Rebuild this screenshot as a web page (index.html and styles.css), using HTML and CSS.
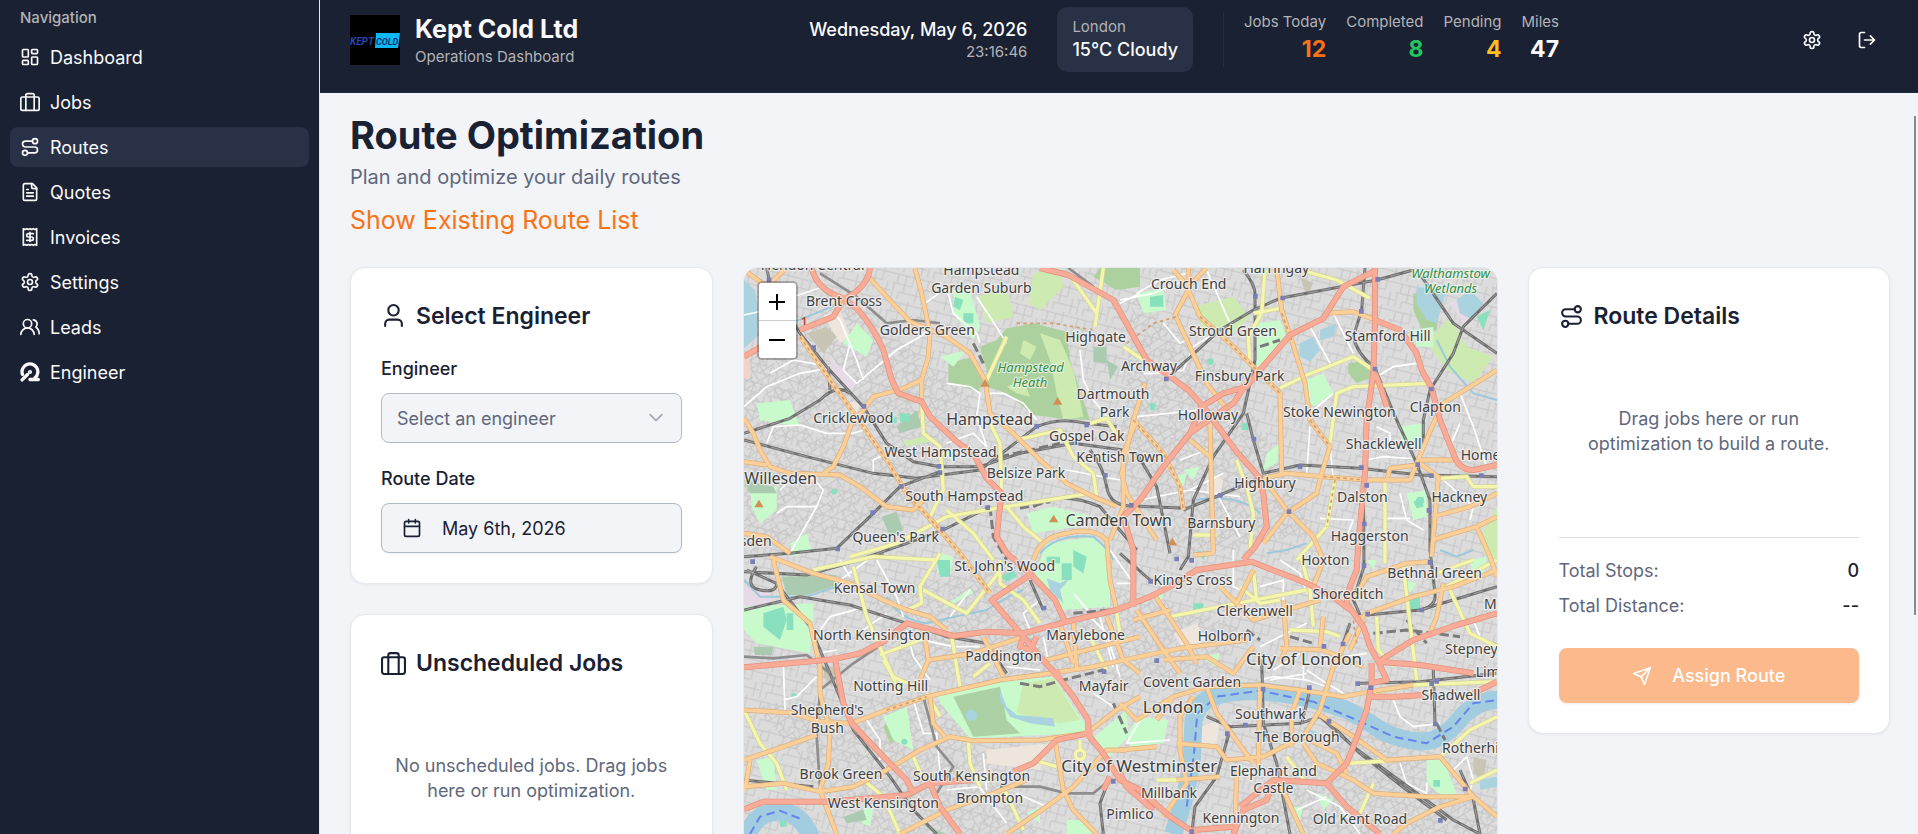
FILE: index.html
```
<!DOCTYPE html>
<html lang="en">
<head>
    <meta charset="UTF-8">
    <meta name="viewport" content="width=device-width, initial-scale=1.0">
    <title>Kept Cold Ltd - Route Optimization</title>
    <link rel="stylesheet" href="styles.css">
</head>
<body>

<!-- Icons -->
<svg class="sprite" aria-hidden="true">
    <symbol id="i-dashboard" viewBox="0 0 24 24"><rect width="7" height="9" x="3" y="3" rx="1"/><rect width="7" height="5" x="14" y="3" rx="1"/><rect width="7" height="9" x="14" y="12" rx="1"/><rect width="7" height="5" x="3" y="16" rx="1"/></symbol>
    <symbol id="i-jobs" viewBox="0 0 24 24"><rect width="22" height="16" x="1" y="6" rx="2"/><path d="M7 22V4a2 2 0 0 1 2-2h6a2 2 0 0 1 2 2v18"/></symbol>
    <symbol id="i-route" viewBox="0 0 24 24"><circle cx="6" cy="19" r="3"/><path d="M9 19h8.5a3.5 3.5 0 0 0 0-7h-11a3.5 3.5 0 0 1 0-7H15"/><circle cx="18" cy="5" r="3"/></symbol>
    <symbol id="i-quote" viewBox="0 0 24 24"><path d="M15 2H6a2 2 0 0 0-2 2v16a2 2 0 0 0 2 2h12a2 2 0 0 0 2-2V7Z"/><path d="M14 2v4a2 2 0 0 0 2 2h4M10 9H8M16 13H8M16 17H8"/></symbol>
    <symbol id="i-invoice" viewBox="0 0 24 24"><path d="M4 2v20l2-1 2 1 2-1 2 1 2-1 2 1 2-1 2 1V2l-2 1-2-1-2 1-2-1-2 1-2-1-2 1Z"/><path d="M16 8h-6a2 2 0 1 0 0 4h4a2 2 0 1 1 0 4H8M12 17.500V6.500"/></symbol>
    <symbol id="i-settings" viewBox="0 0 24 24"><path d="M12.220 2h-.44a2 2 0 0 0-2 2v.18a2 2 0 0 1-1 1.730l-.43.25a2 2 0 0 1-2 0l-.15-.08a2 2 0 0 0-2.730.73l-.22.38a2 2 0 0 0 .73 2.730l.15.1a2 2 0 0 1 1 1.720v.51a2 2 0 0 1-1 1.740l-.15.09a2 2 0 0 0-.73 2.730l.22.38a2 2 0 0 0 2.730.73l.15-.08a2 2 0 0 1 2 0l.43.25a2 2 0 0 1 1 1.730V20a2 2 0 0 0 2 2h.44a2 2 0 0 0 2-2v-.18a2 2 0 0 1 1-1.730l.43-.25a2 2 0 0 1 2 0l.15.08a2 2 0 0 0 2.730-.73l.22-.39a2 2 0 0 0-.73-2.730l-.15-.08a2 2 0 0 1-1-1.740v-.5a2 2 0 0 1 1-1.740l.15-.09a2 2 0 0 0 .73-2.730l-.22-.38a2 2 0 0 0-2.730-.73l-.15.08a2 2 0 0 1-2 0l-.43-.25a2 2 0 0 1-1-1.730V4a2 2 0 0 0-2-2z"/><circle cx="12" cy="12" r="3"/></symbol>
    <symbol id="i-users" viewBox="0 0 24 24"><path d="M18 21a8 8 0 0 0-16 0" transform="translate(-1)"/><circle cx="9" cy="8" r="5"/><path d="M23 20c0-3.400-2-6.500-4-8a5 5 0 0 0-3-8.600"/></symbol>
    <symbol id="i-engineer" viewBox="0 0 24 24"><path stroke-width="4" d="M3 15A9.500 9.500 0 1 1 18 19"/><path stroke-width="4" d="M2.500 21.500 9 15M12 21h10"/><circle cx="12" cy="12" r="1.500"/></symbol>
    <symbol id="i-user" viewBox="0 0 24 24"><path d="M20 21v-2a4 4 0 0 0-4-4H8a4 4 0 0 0-4 4v2"/><circle cx="12" cy="6" r="5"/></symbol>
    <symbol id="i-calendar" viewBox="0 0 24 24"><path d="M8 2v4M16 2v4M3 10h18"/><rect width="18" height="18" x="3" y="4" rx="2"/></symbol>
    <symbol id="i-chevron" viewBox="0 0 24 24"><path d="m5 8 7 7 7-7"/></symbol>
    <symbol id="i-logout" viewBox="0 0 24 24"><path d="M9 21H5a2 2 0 0 1-2-2V5a2 2 0 0 1 2-2h4M16 17l5-5-5-5M21 12H9"/></symbol>
    <symbol id="i-send" viewBox="0 0 24 24"><path d="m22 2-7 20-4-9-9-4Z"/><path d="M22 2 11 13"/></symbol>
</svg>

<div class="app">
    <nav class="sidebar" aria-label="Navigation">
        <p class="sidebar-title">Navigation</p>
        <a href="#dashboard"><svg class="icon"><use href="#i-dashboard"/></svg>Dashboard</a>
        <a href="#jobs"><svg class="icon"><use href="#i-jobs"/></svg>Jobs</a>
        <a href="#routes" class="active"><svg class="icon"><use href="#i-route"/></svg>Routes</a>
        <a href="#quotes"><svg class="icon"><use href="#i-quote"/></svg>Quotes</a>
        <a href="#invoices"><svg class="icon"><use href="#i-invoice"/></svg>Invoices</a>
        <a href="#settings"><svg class="icon"><use href="#i-settings"/></svg>Settings</a>
        <a href="#leads"><svg class="icon"><use href="#i-users"/></svg>Leads</a>
        <a href="#engineer"><svg class="icon"><use href="#i-engineer"/></svg>Engineer</a>
    </nav>

    <div class="content">
        <header class="header">
            <div class="brand">
                <svg class="logo" viewBox="0 0 50 50" role="img" aria-label="Kept Cold">
                    <rect width="50" height="50" fill="#000"/>
                    <path d="M26 18h24l-2 15H25z" fill="#0bb8f5"/>
                    <text x="0" y="30" class="logo-text" fill="#2746a8">KEPT</text>
                    <text x="26" y="30" class="logo-text small-caps" fill="#12306e">COLD</text>
                </svg>
                <div>
                    <div class="brand-name">Kept Cold Ltd</div>
                    <div class="small">Operations Dashboard</div>
                </div>
            </div>
            <div class="status">
                <div class="clock">
                    <div class="strong">Wednesday, May 6, 2026</div>
                    <div class="small">23:16:46</div>
                </div>
                <div class="weather">
                    <div class="small">London</div>
                    <div class="strong">15°C Cloudy</div>
                </div>
                <div class="stats">
                    <div class="stat"><div class="small">Jobs Today</div><div class="number orange">12</div></div>
                    <div class="stat"><div class="small">Completed</div><div class="number green">8</div></div>
                    <div class="stat"><div class="small">Pending</div><div class="number yellow">4</div></div>
                    <div class="stat"><div class="small">Miles</div><div class="number">47</div></div>
                </div>
            </div>
            <div class="actions">
                <button type="button" aria-label="Settings"><svg class="icon"><use href="#i-settings"/></svg></button>
                <button type="button" aria-label="Log out"><svg class="icon"><use href="#i-logout"/></svg></button>
            </div>
        </header>

        <main class="main">
            <h1>Route Optimization</h1>
            <p class="subtitle">Plan and optimize your daily routes</p>
            <button type="button" class="link-button">Show Existing Route List</button>

            <div class="grid">
                <div class="column">
                    <section class="card">
                        <h2><svg class="icon large"><use href="#i-user"/></svg>Select Engineer</h2>
                        <label for="engineer">Engineer</label>
                        <div class="select-box">
                            <select id="engineer">
                                <option>Select an engineer</option>
                            </select>
                            <svg class="icon chevron"><use href="#i-chevron"/></svg>
                        </div>
                        <label for="date">Route Date</label>
                        <button type="button" id="date" class="date-button"><svg class="icon"><use href="#i-calendar"/></svg>May 6th, 2026</button>
                    </section>
                    <section class="card">
                        <h2><svg class="icon large"><use href="#i-jobs"/></svg>Unscheduled Jobs</h2>
                        <p class="empty">No unscheduled jobs. Drag jobs here or run optimization.</p>
                    </section>
                </div>

                <div class="map">
                    <svg class="map-canvas" viewBox="12 24 2259 2250" preserveAspectRatio="xMidYMin slice" role="img" aria-label="Map of London">
                        <defs>
                            <pattern id="streets" width="92" height="84" patternUnits="userSpaceOnUse" patternTransform="rotate(14)">
                                <path d="M0 10h92M0 38h60M24 62h68M14 10v28M38 10v52M60 0v38M78 38v46M6 38v46M24 62v22"/>
                            </pattern>
                            <pattern id="streets2" width="76" height="88" patternUnits="userSpaceOnUse" patternTransform="rotate(-32)">
                                <path d="M0 8h76M0 30h50M20 54h56M0 74h76M12 8v22M34 30v44M50 8v46M66 54v34M8 30v44"/>
                            </pattern>
                            <g id="rail">
                                <path d="M80 24 90 70 180 220 260 320 370 440 440 550 520 605 600 620 720 620 840 580 1000 550 1150 570M12 520 150 475 240 420Q290 370 330 400M270 390 265 320M12 540 200 590 400 640 530 655 720 630 890 500Q960 470 1040 490L1130 500M12 890 150 880 290 865 400 760 480 680 600 635M370 895 500 850 610 810 750 740M880 740Q960 690 1080 740L1190 870M1050 570Q1090 620 1100 680 1110 740 1180 738L1340 745"/>
                                <path d="M1510 30Q1550 80 1545 110L1545 300 1510 460 1420 590 1360 720 1345 890 1320 930M1520 460 1540 540 1570 640 1680 615 1860 625 2040 645 2271 650M1280 355 1440 210 1540 150 1620 115 1910 60 2020 30M1875 24 1865 150 1840 230Q1850 280 1905 325L1970 480 2030 610 2070 720 2070 870 2085 1000Q2090 1040 2040 1050L1880 1065M2045 50 2140 190 2271 280M2271 100 2170 200 2140 280 2070 390 2050 480 2050 560M1870 660 1872 920 1840 1020 1860 1065M1190 580 1250 680 1290 880M1330 750 1440 705 1570 650"/>
                                <path d="M12 935 200 945 430 880M12 1050 180 1010 330 1035 500 1090 620 1130 740 1150 800 1240M20 930 110 970 210 1100 270 1240 340 1410 450 1550 520 1650 590 1722M50 920Q10 980 60 990 110 1000 110 970M12 1560 220 1580M870 960 910 1050M1110 1550 1080 1630 1090 1722"/>
                                <path d="M1140 880 1230 960M1565 1200 1570 1390 1610 1510 1650 1722M1400 1370 1470 1400 1680 1390 1740 1370 1840 1460 1990 1570 2140 1680 2220 1722M1760 1380 1860 1480 2000 1590 2120 1680M1710 1290 1685 1390M1470 1410 1430 1550 1365 1640 1355 1722M1860 1270 2040 1265 2271 1240M2040 1050 2271 980M2080 1230 2085 1390M1810 1150 1830 1090M2160 1530 2200 1620 2220 1722"/>
                            </g>
                            <g id="minor">
                                <path d="M1090 24 1065 200M1000 60 1070 160M800 230 740 360M545 430 550 520 600 560 610 690 570 770M750 490 780 550 785 700M330 890 470 850 620 770 800 740 1050 700M620 750 700 820 760 900M800 740 850 800 910 850M830 540 960 510 1000 590 1060 640 1070 710M1050 490 1100 475 1140 540M1150 260 1210 300M1700 35 1790 60 1890 115M1540 160 1620 145M1575 30 1565 160 1525 230 1530 310M1620 385 1700 345 1840 290 1900 330M1770 550 1790 400 1840 380 2070 370M1785 660 1760 800 1670 900M1935 660 1935 910M1490 600 1520 680 1540 760 1530 870M1360 825 1430 825M2100 655 2180 650 2200 680 2271 680"/>
                                <path d="M1680 880 1710 990 1720 1100M1290 1070 1440 1040 1700 990M1650 1110 1760 1115 1800 1130M2060 950 2200 900M2100 990 2271 900M2130 990 2190 1120 2271 1160M1910 1070 1915 1170 1960 1220M1890 1300 2020 1275 2271 1265M1820 1510 1980 1500M1900 1570 1860 1660M1640 1490 1700 1570M2271 1370 2190 1410 2100 1490M2190 1570 2271 1530M1250 1560 1340 1560M1540 930 1550 1020M1500 980 1560 1030 1620 1020M1990 920 2030 1260"/>
                                <path d="M12 1350 60 1450 110 1510 140 1590M340 920 380 1070 480 1300M220 930 400 890 590 900M600 880 540 980 545 1030 500 1050M550 990 680 1060 790 920M420 1185 540 1140M430 1200 460 1250 500 1270M635 1130 660 1280M520 1490 550 1560M685 1445 690 1510 720 1580M790 1580 850 1710M370 1560 430 1610 480 1722M780 900 780 970 850 1020 900 1090M880 1500 950 1520M1020 1440 1020 1470M560 1300 600 1370M700 1250 750 1210M1130 1060 1140 1120M1050 1130 1100 1230"/>
                                <circle cx="1020" cy="1484" r="14"/>
                            </g>
                            <g id="secondary">
                                <path d="M12 30 80 80 140 24M385 50 440 110 510 185 620 230 690 280 735 360 750 460 820 520 900 600 980 670 1060 710 1130 740M525 24 545 100 570 220 565 290 545 360 545 425M545 360 490 385 400 410 370 450 335 490 310 560 280 620 250 640M12 475 40 520 60 570 90 620 150 640 300 645 360 680 440 740 520 750 560 710M12 605 80 615M12 820 80 830 150 880M90 890 220 940 330 970 430 1020 500 1050 570 1070 620 1110M180 230 270 360 370 500 440 600 500 700 600 810 660 880 750 1000"/>
                                <path d="M880 900Q900 830 980 820 1060 800 1100 840L1110 960 1130 1050M1190 480 1150 580 1150 740 1110 840M100 900 130 1020 210 1090 240 1220 240 1300 270 1410 265 1510 240 1590 290 1722M12 1350 150 1358 240 1385 335 1390 440 1350 560 1310 780 1260 930 1240 1060 1220 1200 1190 1320 1165 1520 1140M12 1500 130 1460 230 1425M12 1580 130 1570 240 1595 340 1580 440 1530 540 1470 630 1430 700 1442 900 1440 1040 1420 1130 1350 1200 1310M550 1100 565 1200 540 1260M565 1200 700 1180 850 1130M570 1310 580 1390 615 1430M480 1722 620 1650 760 1600 860 1560M800 1722 920 1640 1000 1580 1100 1470 1160 1470M945 1440 970 1590 1000 1650 1070 1722M1000 1080 1010 1230M960 1090 1000 1210M920 1200 1200 1130M730 1130 790 1250M1100 1070 1150 1200 1200 1240M15 1590 30 1500"/>
                                <path d="M1345 24 1345 90 1305 165 1350 260 1400 370 1470 460M1345 90 1380 170 1470 250 1540 320 1620 400 1625 640M1300 30 1345 80 1400 24M1610 24 1625 150 1655 240 1695 370 1710 480 1770 560 1745 640 1730 700 1640 760 1570 850M1215 370 1180 480 1145 640 1160 700 1250 840M1180 480 1270 580 1320 680 1330 750M1410 490 1415 700 1420 880M1350 540 1410 590M1570 655 1640 640 1750 650 1880 660 2010 660 2030 610 2080 490 2110 430 2271 330M2040 600 2140 600M2095 650 2075 890M1940 660 1950 625 2030 615M2080 770 2190 740 2271 700M2075 840 2210 800 2271 770M2210 800 2250 890 2271 950M1570 655 1640 750 1720 830 1750 900 1720 980M1760 160 1840 155 1920 185M1420 880 1360 885M2040 610 2100 655"/>
                                <path d="M1190 1050 1270 1170 1320 1240M1240 1000 1340 1150 1370 1210M1180 1080 1290 1050M1270 1200 1400 1190 1480 1240 1540 1160M1540 930 1490 1030 1540 1080 1740 1020M1440 980 1500 1040M1630 1020 1640 1160 1620 1210M1620 1165 1750 1170 1870 1220M1750 1070 1740 1160M1830 1120 1780 1220 1740 1350 1690 1430 1570 1490 1460 1500 1430 1460 1310 1450M1870 1080 1830 1170M1400 1280 1560 1275 1680 1290 1810 1310 1890 1295 2020 1275M1560 1280 1555 1520M1680 1290 1655 1360 1655 1460M1400 1280 1430 1360 1540 1510M1360 1310 1320 1370 1320 1470 1340 1570 1270 1670M1310 1560 1440 1550M1740 1365 1840 1430 1940 1500 2100 1490 2200 1610 2271 1670M1850 1090 1880 1060 2020 1010 2140 980 2271 930M2110 970 2090 1070 2070 1120M1840 1020 1880 950 2000 910 2070 905M1690 1450 1730 1510 1840 1560 1900 1600 2060 1610M2200 1610 2100 1640 2000 1690 1960 1722M1490 1520 1485 1722M1620 1570 1690 1722M1250 1460 1140 1470M1140 1330 1190 1380 1300 1310M1250 1380 1300 1310 1400 1280M1690 1430 1790 1480 1820 1540M2060 1610 2200 1610"/>
                            </g>
                            <g id="primary">
                                <path d="M215 24Q230 90 310 115L350 145Q400 200 430 270L455 360 475 400 545 425 570 470 650 545 700 580 740 655 785 700 780 740 770 830 800 880 870 940 945 1020 975 1085M390 24Q385 80 310 120L280 170 180 210M12 290 60 262M900 24 985 45 1120 120 1165 200 1220 300 1290 350 1345 390 1390 440 1490 575 1560 655 1570 700 1580 800 1545 860 1510 900"/>
                                <path d="M1900 35 1810 80 1750 175 1650 225 1560 330 1520 380 1450 400 1385 440 1350 520 1270 620 1200 720 1150 770 1180 870 1180 1040M1520 370 1480 430 1420 470 1350 520M1905 24 1905 180 1900 340 1880 480 1875 640 1855 850 1850 930 1830 980 1820 1030 1870 1100 1890 1160 1915 1205M1905 180 1980 210 2030 280 2045 330 2075 385 2100 480 2140 580Q2155 630 2200 630L2271 615M1905 340 1925 390 1940 440"/>
                                <path d="M12 1222 280 1198 360 1180 430 1145 500 1090 560 1105 640 1128 740 1115 850 1120 980 1085 1130 1050 1230 1010 1290 980 1370 930 1535 905 1700 970 1780 1010 1830 1050M285 1198 310 1330 335 1390 430 1490 500 1560 520 1600M12 1648 70 1625 270 1625 500 1605 570 1570 700 1560M570 1570 600 1640 660 1722M870 945 755 1020 850 1130 900 1190 950 1245 1000 1310 1045 1380 1045 1425 1090 1480 1140 1560 1200 1590 1290 1670 1370 1722M1045 1420 950 1440 880 1510 820 1535M850 1130 840 1160 870 1170 890 1130M1110 1550 1090 1590M1140 1540 1160 1580 1240 1650"/>
                                <path d="M1915 1205 2040 1215 2200 1240M1915 1205 2020 1140 2150 1095 2271 1060M1895 1210 1895 1270 1880 1350 1840 1460 1820 1510 1760 1570 1600 1560 1580 1620 1510 1650 1480 1722M1760 1570 1820 1640 1920 1722M1915 1205 1940 1260 1890 1270M1890 1310 1970 1310 2050 1305M2200 1300 2271 1265M1360 1710 1480 1700M1600 1560 1500 1640"/>
                            </g>
                        </defs>
                        <rect class="land" width="2300" height="2300"/>
                        <rect fill="url(#streets)" width="2300" height="2300"/>
                        <path fill="url(#streets2)" d="M12 280 330 120 700 420 560 760 12 880zM1180 100 1500 380 1720 820 1300 900 1140 600zM380 1000 900 900 1500 1100 1400 1300 500 1250zM40 1340 620 1300 900 1722H400zM1600 1500 1900 1380 2271 1650V1722H1500z"/>

                        <!-- Built-up blocks and retail -->
                        <path fill="#eee6dc" d="M250 165 300 150 330 230 300 250zM330 425 360 430 350 465 325 450zM1400 640 1450 660 1440 710 1400 700zM740 1470 930 1450 900 1530 740 1510zM1380 1400 1440 1380 1430 1450 1370 1460zM1300 1120 1370 1090 1400 1140 1330 1170z"/>
                        <path fill="#e6dae6" d="M270 290 350 370 335 395 275 350zM12 980 90 1000 100 1030 12 1060zM2130 130 2190 100 2230 150 2170 190z"/>
                        <path fill="#f5d3c8" d="M12 292h17v63H12z"/>
                        <path fill="#c9c5b4" d="M200 220 260 200 290 230 250 280zM2200 1490 2240 1500 2230 1560 2200 1540zM255 1210 290 1230 275 1280 250 1250zM1680 50 1720 70 1700 110z"/>

                        <!-- Parks -->
                        <g fill="#add19e">
                            <path d="M720 260 770 240 800 205 880 190 980 215 990 300 1050 480 960 475 880 465 800 400 740 380 740 330z"/>
                            <path d="M625 310 700 290 735 350 715 395 625 365zM1080 24H1200V80L1130 90 1060 50z"/>
                            <path d="M1825 310 1890 300 1900 350 1850 370 1825 340z"/>
                            <path d="M430 1400 480 1355 500 1430 450 1450zM2060 1500 2100 1500 2120 1580 2080 1580z"/>
                            <path d="M2020 100 2100 120 2090 210 2050 220 2020 150z"/>
                        </g>
                        <g fill="#cdebb0">
                            <path d="M880 40 960 24 970 80 900 150 865 130zM715 110 800 80 820 170 740 190z"/>
                            <path d="M2060 250 2130 170 2180 260 2260 290 2200 370 2120 330z"/>
                            <path d="M900 220 960 240 1000 330 1030 470 970 480 950 400 930 300z"/>
                            <path d="M850 240 890 260 870 300 840 280zM800 380 850 360 870 410 830 400z"/>
                            <path d="M1360 140 1480 110 1530 170 1480 220 1390 210z"/>
                            <path d="M490 545 560 525 570 545 500 560zM2220 830 2271 740V900L2230 880z"/>
                        </g>
                        <g fill="#c8facc">
                            <path d="M310 250 350 190 400 240 380 290zM50 430 150 420 180 500 60 480z"/>
                            <path d="M600 290 680 270 640 320zM640 90 690 90 720 200 700 240 640 160z"/>
                            <path d="M1550 190 1620 180 1640 230 1590 290 1550 330z"/>
                            <path d="M1700 360 1750 340 1780 400 1720 440 1700 410zM1975 500 2050 490 2060 560 1990 560z"/>
                            <path d="M860 760 940 740 1060 770 1010 800 880 820z"/>
                            <path d="M900 900 920 850 1060 830 1110 880 1110 1040 960 1050 900 980 880 930z"/>
                            <path d="M30 670 110 680 110 750 60 790 35 740zM12 1040 220 1030 220 1100 210 1180 50 1150 12 1110z"/>
                            <path d="M590 1300 780 1265 940 1250 1040 1400 1030 1420 690 1435 600 1330z"/>
                            <path d="M1050 1440 1160 1350 1165 1430 1110 1490zM1160 1420 1200 1370 1285 1380 1270 1450 1170 1460z"/>
                            <path d="M430 1370 500 1340 520 1470 460 1440zM50 1500 100 1490 110 1590 80 1590z"/>
                            <path d="M2060 1500 2110 1500 2150 1600 2120 1620 2060 1570zM980 1680 1040 1680 1060 1722H980z"/>
                            <path d="M600 1050 690 985 700 1000 660 1020zM2190 900 2240 890 2230 950 2200 960zM1580 580 1620 550 1610 610 1570 630zM2000 700 2060 690 2060 770 2020 780zM150 850 200 820 215 870 160 890z"/>
                            <path d="M2020 210 2080 200 2080 260 2030 260zM610 570 650 570 640 610zM600 880 640 890 630 940 590 940zM370 1640 400 1650 390 1700 365 1690z"/>
                            <path d="M1190 100 1270 85 1280 150 1210 160zM1330 630 1380 620 1360 660zM860 1660 900 1640 900 1690zM1300 650 1340 640 1330 680zM1990 960 2030 970 2010 1000zM1880 900 1910 900 1900 930zM1380 1190 1440 1180 1430 1220zM1650 1640 1690 1640 1680 1680zM1730 1600 1780 1620 1750 1650zM700 1560 740 1540 750 1570zM1240 1010 1270 1000 1260 1040z"/>
                        </g>
                        <path fill="#abd1a4" d="M640 1310 780 1280 800 1380 840 1420 700 1430z"/>
                        <path fill="#cdebb0" d="M850 1270 940 1255 1020 1380 960 1390 830 1360z"/>
                        <g fill="#aacbaf">
                            <path d="M125 950 290 945 280 980 200 1005 140 1005zM470 500 530 450 545 500 480 520zM425 770 470 755 490 810 450 830zM1060 260 1100 260 1100 310 1060 305zM1100 300 1135 320 1110 360z"/>
                            <path d="M310 1670 370 1650 380 1680 320 1690zM40 1160 100 1160 95 1185 45 1185zM12 660 100 680 110 700 30 700zM540 1690 620 1722H590z"/>
                        </g>
                        <g fill="#88e0be">
                            <path d="M450 470h20v20h-20zM480 460h30v25h-30zM645 110 670 120 660 150 640 140zM670 160h30v30h-30zM70 1060 130 1040 140 1080 120 1140 70 1100zM140 1060h20v50h-20zM590 900h40v50h-30zM780 950 820 930 830 950 800 965zM920 890h40v20h-40zM965 910h30v50h-30zM1000 870 1040 890 1030 940 1000 920z"/>
                            <path d="M2210 170 2250 150 2230 210zM2020 725 2050 710 2050 740 2030 745zM1230 110 1270 105 1270 140 1230 140zM1505 490h20v20h-20zM2080 1560h20v20h-20zM1370 870 1400 880 1390 900zM1360 1030h30v25h-30zM2000 1010h40v40h-40zM120 1670h20v30h-20zM1230 430h15v20h-15z"/>
                            <circle cx="1411" cy="305" r="10"/><circle cx="282" cy="695" r="9"/><circle cx="493" cy="1445" r="9"/><circle cx="162" cy="1307" r="8"/><circle cx="2040" cy="722" r="12"/>
                        </g>

                        <!-- Water -->
                        <g fill="#aad3df">
                            <path d="M12 60 45 90 55 150 50 230 12 265zM1680 250 1720 230 1740 270 1710 305 1680 290zM1740 210 1790 190 1780 230 1740 240z"/>
                            <path d="M2030 80 2120 90 2090 190 2060 180 2030 130zM2150 120 2190 90 2230 130 2200 180 2160 160z"/>
                            <path d="M780 1290 800 1340 830 1365 940 1375 945 1400 870 1390 810 1370 780 1320z"/>
                            <circle cx="694" cy="1366" r="17"/>
                            <path d="M920 955 960 970 990 955 960 990 970 1030 930 990zM1690 1400 1740 1420 1700 1430zM2220 1560 2271 1550V1580L2220 1590z"/>
                        </g>
                        <g class="water">
                            <path class="river" d="M1300 1722 1335 1610 1355 1510 1360 1390Q1365 1330 1420 1310 1480 1290 1570 1295 1700 1305 1820 1350 1880 1380 1920 1410 2010 1455 2080 1440 2130 1420 2170 1365 2220 1320 2271 1320"/>
                            <path class="river" d="M20 1735Q40 1660 110 1655 180 1650 215 1735"/>
                            <path d="M12 960 60 1010 200 1010 290 980M440 1010Q480 1080 560 1090 640 1070 740 1050 800 1010 850 990M900 880Q950 820 1060 830 1110 870 1120 900M2090 240 2130 320 2200 400 2271 420M150 190 240 155 300 130M1580 880 1640 870 1700 850M2100 870 2150 890 2200 870M1360 720Q1500 700 1560 760M780 1150 840 1130 880 1140"/>
                            <path class="ferry" d="M1340 1640 1362 1480 1372 1360 1430 1310 1560 1292 1720 1325 1850 1380 1960 1430 2060 1450 2140 1400 2200 1330 2271 1320M30 1722 60 1670 120 1652 190 1680"/>
                        </g>

                        <!-- Minor streets in white -->
                        <path class="white" d="M12 165 80 150 160 110 250 80M90 340 160 300 270 320M350 370 470 270 540 230 565 210M300 180 280 160M330 250 310 330 350 370M370 360 350 300 300 180M12 440 80 380 180 340 265 325M100 500 180 495 260 520 340 520 370 510M80 550 100 500M120 690 140 670 200 660 230 650M230 740 250 690 215 650M230 740 150 880M230 740 140 740 110 760M400 640 400 600 440 580M620 80 640 160 710 220 720 250M710 110 750 170 800 250M555 130 610 90M620 370 690 380 720 400 710 470 740 560 700 520 620 550M740 400 790 400 850 430 890 480M1140 130 1200 100M1020 270 1030 360 1060 420 1110 480M1190 100 1260 60 1340 40M1400 30 1470 190 1360 260 1330 330 1250 340 1210 340M1270 190 1320 250 1340 240M1190 470 1380 450M1710 200 1770 310M1780 160 1840 280M1910 350 1960 320 2030 310M1720 450 1780 400M1910 500 1950 520 1950 560M1880 600 1930 590 2080 600M1700 640 1710 500M1770 560 1780 660M1980 700 2000 780 2050 810M1940 775 2010 775M1740 775 1840 780 1820 830M2160 400 2200 500 2240 620M2110 660 2200 740 2190 780M2160 490 2130 560M1430 700 1500 830M1320 600 1400 570M1350 690 1450 640M1200 720 1350 690 1500 710M230 1180 290 1170M300 960 440 860M240 1110 270 1070 360 1045M370 1110 440 1060M130 1210 135 1350M130 1320 170 1310 230 1250M500 1110 520 1190 570 1260M410 900 470 1010 490 1070M300 900 330 950M520 1320 550 1420 590 1420 600 1540M380 1380 420 1440 420 1500M620 1590 720 1580M710 1570 800 1690M730 1480 740 1590M830 1600 920 1640M690 990 630 1070M500 1130 640 1160 720 1160M800 1220 900 1230M910 1130 930 1230 960 1240M1050 1070 1100 1120 1140 1250M1080 1070 1120 1220M1060 1300 1120 1340M1200 1380 1160 1450 1290 1440M1560 1160 1700 1090M1590 1260 1700 1240M1560 1260 1600 1250 1700 1260 1760 1280M1600 1230 1680 1180M1700 1230 1760 1270 1810 1300M1690 1200 1690 1260M1740 1200 1880 1180M1960 1320 1980 1370 2020 1400 2100 1390M2140 1530 2180 1490 2200 1560 2190 1590M1980 1510 2000 1570 2060 1600 2060 1570M1700 1590 1800 1640 1860 1722M1670 1650 1760 1610M1480 870 1480 980 1500 990M1630 1070 1630 960 1560 980M1620 900 1680 940 1700 1000M1340 60 1240 100 1140 120M2200 1080 2220 1130M1000 1000 1060 1070M900 1020 850 1060 870 1110M1110 870 1180 970M1180 970 1130 970M980 630 1140 660"/>

                        <!-- Railways -->
                        <use href="#rail" class="rail"/>
                        <use href="#rail" class="rail-ties"/>
                        <path class="tube" d="M240 40 350 110 440 190 520 180 600 190M985 24 1060 80M12 1190 100 1195 200 1185 270 1240M430 1150 340 1210 240 1290 230 1430 240 1580M550 1310 590 1460 640 1520 590 1600M780 1580 900 1580 980 1600 1060 1600 1110 1560"/>
                        <path class="tunnel" d="M840 1270 900 1280 970 1260 1090 1230M780 590 960 550M700 250 730 310M750 740 760 830 800 900M840 745 930 725M1000 1060 1110 1050M1900 1120 2000 1110 2160 1130M2000 1080 2060 1150M1520 1110 1560 1140M1650 1130 1720 1150M1560 260 1620 240M1120 1330 1160 1420M2090 1390 2115 1440"/>

                        <!-- Roads: each kind is drawn twice, casing then fill -->
                        <use href="#minor" class="road minor"/>
                        <use href="#minor" class="road minor-fill"/>
                        <use href="#secondary" class="road secondary"/>
                        <use href="#secondary" class="road secondary-fill"/>
                        <path class="tolled" d="M180 230 270 360 370 500 440 600 500 700 600 810 660 880 750 1000M830 190 940 190 1060 210M1160 250 1240 190 1310 170M1380 170 1470 250 1540 320 1620 400M1180 480 1270 580 1320 680 1330 750M1710 480 1770 560M1625 160 1655 240M1750 650 1880 660M1785 660 1760 800M1850 1150 1840 1080M440 1350 560 1310"/>
                        <use href="#primary" class="road primary"/>
                        <use href="#primary" class="road primary-fill"/>
                        <circle class="junction" cx="310" cy="120" r="16"/>
                        <circle class="junction" cx="1045" cy="1421" r="14"/>
                        <circle class="junction" cx="285" cy="1196" r="12"/>
                        <circle class="junction" cx="950" cy="1243" r="14"/>

                        <!-- Peaks and stations -->
                        <path fill="#d08f55" d="M735 357l14 23h-28zM953 411l14 23h-28zM57 719l14 23H43zM941 764l14 23h-28zM1297 833l14 23h-28z"/>
                        <g class="station">
                            <path d="M80 53h14v14H80zM214 256h14v14h-14zM365 432h14v14h-14zM590 612h14v14h-14zM593 631h14v14h-14zM477 672h14v14h-14zM391 751h14v14h-14zM286 860h14v14h-14zM601 800h14v14h-14zM736 736h14v14h-14zM883 492h14v14h-14zM1033 488h14v14h-14zM1089 639h14v14h-14zM1167 729h14v14h-14zM31 898h14v14H31z"/>
                            <path d="M1906 51h14v14h-14zM1621 107h14v14h-14zM1539 102h14v14h-14zM1857 147h14v14h-14zM1898 320h14v14h-14zM1272 350h14v14h-14zM1535 530h14v14h-14zM1673 613h14v14h-14zM1857 616h14v14h-14zM2067 380h14v14h-14zM2026 607h14v14h-14zM2067 640h14v14h-14zM2217 640h14v14h-14zM1873 669h14v14h-14zM1434 699h14v14h-14zM1640 748h14v14h-14zM2060 744h14v14h-14zM1866 785h14v14h-14z"/>
                            <path d="M905 1037h14v14h-14zM1085 1228h14v14h-14zM1113 1557h14v14h-14zM1303 890h14v14h-14zM1348 894h14v14h-14zM1225 957h14v14h-14zM1243 1195h14v14h-14zM1745 1152h14v14h-14zM1802 1145h14v14h-14zM1562 1280h14v14h-14zM1701 1276h14v14h-14zM1846 1264h14v14h-14zM1885 1276h14v14h-14zM2068 1264h14v14h-14zM2083 1257h14v14h-14zM2038 1043h14v14h-14zM1876 1055h14v14h-14zM2063 900h14v14h-14zM1865 910h14v14h-14zM1509 1388h14v14h-14zM1760 1377h14v14h-14zM1455 1414h14v14h-14zM2079 1385h14v14h-14zM2169 1580h14v14h-14zM2094 1674h14v14h-14zM1348 1708h14v14h-14z"/>
                        </g>

                        <g class="place">
                            <text x="218" y="30">Hendon Central</text>
                            <text x="724" y="46">Hampstead</text>
                            <text x="724" y="98">Garden Suburb</text>
                            <text x="312" y="138">Brent Cross</text>
                            <text x="562" y="225">Golders Green</text>
                            <text x="1067" y="246">Highgate</text>
                            <text x="340" y="490">Cricklewood</text>
                            <text x="1119" y="418">Dartmouth</text>
                            <text x="1124" y="472">Park</text>
                            <text x="1040" y="543">Gospel Oak</text>
                            <text x="602" y="592">West Hampstead</text>
                            <text x="1140" y="605">Kentish Town</text>
                            <text x="858" y="653">Belsize Park</text>
                            <text x="673" y="722">South Hampstead</text>
                            <text x="467" y="845">Queen's Park</text>
                            <text x="95" y="857" class="end">Harlesden</text>
                            <text x="1346" y="87">Crouch End</text>
                            <text x="1609" y="39">Harringay</text>
                            <text x="1479" y="227">Stroud Green</text>
                            <text x="1943" y="244">Stamford Hill</text>
                            <text x="1227" y="333">Archway</text>
                            <text x="1499" y="363">Finsbury Park</text>
                            <text x="1404" y="481">Holloway</text>
                            <text x="1798" y="470">Stoke Newington</text>
                            <text x="2086" y="457">Clapton</text>
                            <text x="1931" y="566">Shacklewell</text>
                            <text x="2162" y="599" class="start">Homerton</text>
                            <text x="1575" y="683">Highbury</text>
                            <text x="1867" y="727">Dalston</text>
                            <text x="2158" y="727">Hackney</text>
                            <text x="1444" y="803">Barnsbury</text>
                            <text x="1889" y="843">Haggerston</text>
                            <text x="1756" y="915">Hoxton</text>
                            <text x="2084" y="953">Bethnal Green</text>
                            <text x="794" y="932">St. John's Wood</text>
                            <text x="404" y="1000">Kensal Town</text>
                            <text x="1359" y="975">King's Cross</text>
                            <text x="1824" y="1017">Shoreditch</text>
                            <text x="1544" y="1069">Clerkenwell</text>
                            <text x="2232" y="1046" class="start">Mile End</text>
                            <text x="395" y="1140">North Kensington</text>
                            <text x="1037" y="1140">Marylebone</text>
                            <text x="1454" y="1142">Holborn</text>
                            <text x="791" y="1202">Paddington</text>
                            <text x="2115" y="1181" class="start">Stepney,</text>
                            <text x="2207" y="1250" class="start">Limehouse</text>
                            <text x="452" y="1293">Notting Hill</text>
                            <text x="1091" y="1292">Mayfair</text>
                            <text x="1356" y="1280">Covent Garden</text>
                            <text x="2133" y="1320">Shadwell</text>
                            <text x="262" y="1365">Shepherd's</text>
                            <text x="262" y="1419">Bush</text>
                            <text x="1591" y="1378">Southwark</text>
                            <text x="1671" y="1447">The Borough</text>
                            <text x="2106" y="1479" class="start">Rotherhithe</text>
                            <text x="303" y="1556">Brook Green</text>
                            <text x="695" y="1564">South Kensington</text>
                            <text x="1600" y="1547">Elephant and</text>
                            <text x="1600" y="1600">Castle</text>
                            <text x="749" y="1629">Brompton</text>
                            <text x="430" y="1643">West Kensington</text>
                            <text x="1287" y="1615">Millbank</text>
                            <text x="1170" y="1678">Pimlico</text>
                            <text x="1503" y="1688">Kennington</text>
                            <text x="1860" y="1692">Old Kent Road</text>
                        </g>
                        <g class="place town">
                            <text x="749" y="496">Hampstead</text>
                            <text x="122" y="671">Willesden</text>
                            <text x="1136" y="799">Camden Town</text>
                        </g>
                        <g class="place city">
                            <text x="1692" y="1215">City of London</text>
                            <text x="1300" y="1358">London</text>
                            <text x="1198" y="1537">City of Westminster</text>
                        </g>
                        <g class="place park">
                            <text x="872" y="335">Hampstead</text>
                            <text x="870" y="381">Heath</text>
                            <text x="2132" y="54">Walthamstow</text>
                            <text x="2132" y="98">Wetlands</text>
                        </g>
                        <text x="184" y="196" class="junction-number">1</text>
                    </svg>
                    <div class="zoom">
                        <button type="button" aria-label="Zoom in"><svg viewBox="0 0 16 16"><path d="M8 0v16M0 8h16"/></svg></button>
                        <button type="button" aria-label="Zoom out"><svg viewBox="0 0 16 16"><path d="M0 8h16"/></svg></button>
                    </div>
                </div>

                <section class="card">
                    <h2><svg class="icon large"><use href="#i-route"/></svg>Route Details</h2>
                    <p class="empty">Drag jobs here or run optimization to build a route.</p>
                    <dl class="totals">
                        <div><dt>Total Stops:</dt><dd>0</dd></div>
                        <div><dt>Total Distance:</dt><dd>--</dd></div>
                    </dl>
                    <button type="button" class="assign" disabled><svg class="icon"><use href="#i-send"/></svg>Assign Route</button>
                </section>
            </div>
        </main>
        <div class="scroll-thumb"></div>
    </div>
</div>

</body>
</html>
```

FILE: styles.css
```
* {
    box-sizing: border-box;
}

body {
    margin: 0;
    font-family: Inter, "Liberation Sans", sans-serif;
    font-size: 18px;
    line-height: 25px;
    color: #1a2133;
    background-color: #f2f4f8;
}

h1, h2, p, dl, dd {
    margin: 0;
}

button, select {
    font: inherit;
    color: inherit;
}

.sprite {
    display: none;
}

.icon {
    width: 20px;
    height: 20px;
    flex-shrink: 0;
    fill: none;
    stroke: currentColor;
    stroke-width: 2;
    stroke-linecap: round;
    stroke-linejoin: round;
}

.icon.large {
    width: 25px;
    height: 25px;
}

.app {
    display: flex;
    height: 100vh;
    overflow: hidden;
}

/* Sidebar */
.sidebar {
    width: 320px;
    flex-shrink: 0;
    display: flex;
    flex-direction: column;
    gap: 5px;
    padding: 8px 10px;
    background-color: #1a2133;
    border-right: 1px solid #e2e5ea;
    color: #fafafa;
}

.sidebar-title {
    padding: 0 10px;
    margin-bottom: 4px;
    font-size: 15px;
    line-height: 20px;
    font-weight: 500;
    color: #b3b3b6;
}

.sidebar a {
    display: flex;
    align-items: center;
    gap: 10px;
    height: 40px;
    padding: 0 10px;
    border-radius: 8px;
    color: inherit;
    text-decoration: none;
}

.sidebar a.active {
    background-color: #283146;
}

/* Header */
.content {
    position: relative;
    flex: 1;
    min-width: 0;
    display: flex;
    flex-direction: column;
}

.header {
    display: flex;
    justify-content: space-between;
    align-items: center;
    flex-shrink: 0;
    padding: 7px 28px 20px 30px;
    background-color: #1a2133;
    border-bottom: 1px solid #1c2b45;
    color: #fafafa;
}

.brand {
    display: flex;
    align-items: center;
    gap: 15px;
}

.logo {
    width: 50px;
    height: 50px;
}

.logo-text {
    font: italic bold 10px Roboto, sans-serif;
}

.logo-text.small-caps {
    font-size: 9px;
}

.brand-name {
    font-size: 25px;
    line-height: 35px;
    font-weight: 700;
}

.small {
    font-size: 15px;
    line-height: 20px;
    color: #b3b3b6;
}

.strong {
    font-weight: 500;
}

.status {
    display: flex;
    align-items: center;
    gap: 30px;
}

.clock {
    text-align: right;
}

.weather {
    padding: 10px 15px;
    border-radius: 10px;
    background-color: #283146;
}

.stats {
    display: flex;
    gap: 20px;
    padding-left: 20px;
    border-left: 1px solid #252d40;
    text-align: right;
}

.number {
    font-size: 23px;
    line-height: 35px;
    font-weight: 700;
}

.orange {
    color: #f97316;
}

.green {
    color: #22c55e;
}

.yellow {
    color: #fbbf24;
}

.actions {
    display: flex;
    gap: 10px;
}

.actions button {
    display: flex;
    align-items: center;
    justify-content: center;
    width: 45px;
    height: 45px;
    padding: 0;
    border: 0;
    background: none;
}

/* Page */
.main {
    flex: 1;
    min-height: 0;
    overflow: hidden;
    padding: 20px 28px 0 30px;
}

h1 {
    font-size: 38px;
    line-height: 45px;
    font-weight: 700;
}

.subtitle {
    margin: 4px 0 11px;
    font-size: 20px;
    line-height: 30px;
    color: #5f687b;
}

.link-button {
    display: block;
    margin-bottom: 29px;
    padding: 0;
    border: 0;
    background: none;
    font-size: 25px;
    line-height: 35px;
    color: #f97316;
}

.grid {
    display: grid;
    grid-template-columns: repeat(4, 1fr);
    gap: 30px;
    align-items: start;
}

.column {
    display: flex;
    flex-direction: column;
    gap: 30px;
}

.card {
    padding: 30px;
    border: 1px solid #e6e8ec;
    border-radius: 15px;
    background-color: #fff;
    box-shadow: 0 1px 3px rgba(0, 0, 0, 0.06);
}

h2 {
    display: flex;
    align-items: center;
    gap: 10px;
    margin-bottom: 23px;
    font-size: 23px;
    line-height: 37px;
    font-weight: 600;
}

label {
    display: block;
    margin-bottom: 13px;
    line-height: 22px;
    font-weight: 500;
}

.select-box {
    position: relative;
    margin-bottom: 25px;
}

select {
    display: block;
    width: 100%;
    height: 50px;
    padding: 0 15px;
    appearance: none;
    border: 1px solid #b1b9c6;
    border-radius: 8px;
    background-color: #f2f4f8;
    color: #5f687b;
}

.chevron {
    position: absolute;
    top: 15px;
    right: 16px;
    color: #a0a5b0;
}

.date-button {
    display: flex;
    align-items: center;
    gap: 20px;
    width: 100%;
    height: 50px;
    padding: 0 20px;
    border: 1px solid #b1b9c6;
    border-radius: 8px;
    background-color: #f2f4f8;
    box-shadow: 0 1px 2px rgba(0, 0, 0, 0.05);
}

.empty {
    padding: 48px 10px 46px;
    text-align: center;
    color: #5f687b;
}

.totals {
    display: flex;
    flex-direction: column;
    gap: 10px;
    margin: 35px 0 30px;
    padding-top: 20px;
    border-top: 1px solid #dcdfe4;
}

.totals div {
    display: flex;
    justify-content: space-between;
}

.totals dt {
    color: #5f687b;
}

.totals dd {
    font-weight: 500;
}

.assign {
    display: flex;
    align-items: center;
    justify-content: center;
    gap: 20px;
    width: 100%;
    height: 55px;
    border: 0;
    border-radius: 8px;
    background-color: #fcb98b;
    box-shadow: 0 1px 3px rgba(0, 0, 0, 0.08);
    color: #fff;
    font-weight: 500;
}

.scroll-thumb {
    position: absolute;
    top: 116px;
    right: 2px;
    width: 2px;
    height: 499px;
    background-color: #8b8b8b;
}

/* Map */
.map {
    position: relative;
    grid-column: span 2;
    height: 752px;
    overflow: hidden;
    border: 1px solid #e6e8ec;
    border-radius: 15px;
}

.map-canvas {
    display: block;
    width: 100%;
    height: 100%;
}

.land {
    fill: #dddcdc;
}

.map-canvas pattern path {
    fill: none;
    stroke: #c6c5c5;
    stroke-width: 3;
}

.white, .tube, .tunnel, .tolled, .road, .rail, .rail-ties, .water path {
    fill: none;
    stroke-linejoin: round;
}

.white {
    stroke: #fff;
    stroke-width: 5;
}

.water path {
    stroke: #9cc9dc;
    stroke-width: 6;
}

.water path.river {
    stroke: #a2cde0;
    stroke-width: 54;
}

.water path.ferry {
    stroke: #6585ee;
    stroke-width: 6;
    stroke-dasharray: 26 14;
}

.rail {
    stroke: #707070;
    stroke-width: 9;
}

.rail-ties {
    stroke: #b9b9b9;
    stroke-width: 2;
    stroke-dasharray: 30 12;
}

.tube {
    stroke: #8e8e8e;
    stroke-width: 8;
}

.tunnel {
    stroke: #7b7b7b;
    stroke-width: 9;
    stroke-dasharray: 28 12;
}

.minor {
    stroke: #d3d39a;
    stroke-width: 14;
}

.minor-fill {
    stroke: #f3f6ac;
    stroke-width: 10;
}

.secondary {
    stroke: #dcae7c;
    stroke-width: 15;
}

.secondary-fill {
    stroke: #fbcf98;
    stroke-width: 11;
}

.primary {
    stroke: #e28f79;
    stroke-width: 18;
}

.primary-fill {
    stroke: #f8ab97;
    stroke-width: 14;
}

.tolled {
    stroke: #cf9f70;
    stroke-width: 5;
    stroke-dasharray: 10 10;
}

.junction {
    fill: #f8ab97;
}

.station {
    fill: #7a7fb8;
}

.place {
    font: 42px "Noto Sans", sans-serif;
    text-anchor: middle;
    fill: #3f3f3f;
    stroke: rgba(245, 245, 245, 0.75);
    stroke-width: 7;
    stroke-linejoin: round;
    paint-order: stroke;
}

.place .start {
    text-anchor: start;
}

.place .end {
    text-anchor: end;
}

.town {
    font-size: 48px;
}

.city {
    font-size: 51px;
}

.park {
    font-size: 39px;
    font-style: italic;
    fill: #2f9140;
}

.junction-number {
    font: bold 30px "Noto Sans", sans-serif;
    fill: #c0402c;
}

.zoom {
    position: absolute;
    top: 13px;
    left: 13px;
    overflow: hidden;
    border: 2px solid rgba(0, 0, 0, 0.25);
    border-radius: 5px;
    background-clip: padding-box;
}

.zoom button {
    display: flex;
    align-items: center;
    justify-content: center;
    width: 37px;
    height: 37px;
    padding: 0;
    border: 0;
    background-color: #fff;
}

.zoom button:first-child {
    height: 38px;
    border-bottom: 1px solid #ccc;
}

.zoom svg {
    width: 16px;
    height: 16px;
    stroke: #000;
    stroke-width: 2;
}
```
